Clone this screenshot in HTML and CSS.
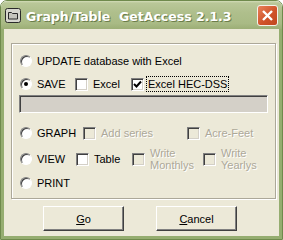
FILE: index.html
```html
<!DOCTYPE html>
<html lang="en">
<head>
    <meta charset="UTF-8">
    <title>Graph/Table GetAccess 2.1.3</title>
    <link rel="stylesheet" href="styles.css">
</head>
<body>

<div class="window">
    <!-- Title bar -->
    <div class="titlebar">
        <svg class="app-icon" width="16" height="15" viewBox="0 0 16 15">
            <rect x="0.5" y="0.5" width="15" height="14" rx="2" fill="#d6d6ce" stroke="#2a2a2a"/>
            <path d="M3.5 4.5h3l1 1h5v5.5h-9z" fill="#c4c4bc" stroke="#2a2a2a"/>
        </svg>
        <span class="title">Graph/Table  GetAccess 2.1.3</span>
        <div class="close-btn">
            <svg width="19" height="19" viewBox="0 0 19 19">
                <path d="M5 5L14 14M14 5L5 14" stroke="#fff" stroke-width="2.4"/>
            </svg>
        </div>
    </div>

    <div class="client">
        <div class="group">
            <div class="row">
                <span class="opt"><span class="radio"></span>UPDATE database with Excel</span>
            </div>
            <div class="row row-save">
                <span class="opt w-save"><span class="radio checked"></span>SAVE</span>
                <span class="opt w-excel"><span class="check"></span>Excel</span>
                <span class="opt">
                    <span class="check">
                        <svg width="9" height="9" viewBox="0 0 9 9"><path d="M1 4l2.5 2.5L8 1.5" stroke="#000" stroke-width="2" fill="none"/></svg>
                    </span>
                    <span class="focus">Excel HEC-DSS</span>
                </span>
            </div>
            <div class="field"></div>
            <div class="row row-graph">
                <span class="opt w-graph"><span class="radio"></span>GRAPH</span>
                <span class="opt w-series disabled"><span class="check"></span>Add series</span>
                <span class="opt disabled"><span class="check"></span>Acre-Feet</span>
            </div>
            <div class="row row-view">
                <span class="opt w-view"><span class="radio"></span>VIEW</span>
                <span class="opt w-table"><span class="check"></span>Table</span>
                <span class="opt w-monthly disabled"><span class="check"></span><span class="two-line">Write<br>Monthlys</span></span>
                <span class="opt disabled"><span class="check"></span><span class="two-line">Write<br>Yearlys</span></span>
            </div>
            <div class="row row-print">
                <span class="opt"><span class="radio"></span>PRINT</span>
            </div>
        </div>

        <div class="buttons">
            <button type="button" class="btn"><u>G</u>o</button>
            <button type="button" class="btn"><u>C</u>ancel</button>
        </div>
    </div>
</div>

</body>
</html>
```

FILE: styles.css
```css
body {
    margin: 0;
    background: #fff;
    font-family: "Liberation Sans", Arial, sans-serif;
    font-size: 11px;
    color: #000;
}

.window {
    width: 283px;
    height: 240px;
    box-sizing: border-box;
    border: 1px solid #6f8a4c;
    border-radius: 7px 7px 0 0;
    overflow: hidden;
    display: flex;
    flex-direction: column;
}

/* Title bar */
.titlebar {
    height: 28px;
    flex: none;
    display: flex;
    align-items: center;
    padding: 0 4px 0 4px;
    background: linear-gradient(#d3dcb8 0, #b9c798 2px, #afbf8c 40%, #a9ba85 80%, #9cae76 100%);
}

.app-icon {
    flex: none;
    margin-top: 1px;
}

.title {
    white-space: pre;
    margin-left: 5px;
    margin-top: 2px;
    font-family: "DejaVu Sans", sans-serif;
    font-weight: bold;
    font-size: 12.5px;
    color: #fff;
    text-shadow: 1px 1px 0 #6b7d4a;
    flex: 1;
}

.close-btn {
    width: 19px;
    height: 19px;
    border: 1px solid #f4f1ea;
    border-radius: 3px;
    background: linear-gradient(135deg, #e8825a, #d0532a 55%, #c0461f);
}

.close-btn svg {
    display: block;
}

/* Client area */
.client {
    flex: 1;
    background: #ece9d8;
    border: 3px solid #95ad70;
    border-top: 0;
    display: flex;
    flex-direction: column;
}

.group {
    margin: 14px 3px 0 7px;
    border: 1px solid #aca899;
    box-shadow: inset 1px 1px 0 #fff, 1px 1px 0 #fff;
    padding: 7px 6px 5px 8px;
    display: flex;
    flex-direction: column;
}

.row {
    height: 20px;
    display: flex;
    align-items: center;
}

.row-save {
    margin-top: 3px;
}

.row-graph {
    margin-top: 10px;
}

.row-view {
    margin-top: 4px;
    height: 24px;
}

.row-print {
    margin-top: 2px;
}

.opt {
    display: flex;
    align-items: center;
    white-space: nowrap;
}

.w-save { width: 55px; }
.w-excel { width: 56px; }
.w-graph { width: 63px; }
.w-series { width: 104px; }
.w-view { width: 56px; }
.w-table { width: 56px; }
.w-monthly { width: 71px; }

.disabled {
    color: #aca899;
    text-shadow: 1px 1px 0 #fff;
}

.two-line {
    line-height: 12px;
}

/* Classic radio */
.radio {
    width: 10px;
    height: 10px;
    flex: none;
    border: 1px solid;
    border-color: #808080 #fff #fff #808080;
    border-radius: 50%;
    background: #fff;
    box-shadow: inset 1px 1px 0 #404040;
    margin-right: 5px;
    display: flex;
    align-items: center;
    justify-content: center;
}

.radio.checked::after {
    content: "";
    width: 4px;
    height: 4px;
    border-radius: 50%;
    background: #000;
}

/* Classic checkbox */
.check {
    width: 11px;
    height: 11px;
    flex: none;
    border: 1px solid;
    border-color: #808080 #fff #fff #808080;
    box-shadow: inset 1px 1px 0 #404040, inset -1px -1px 0 #d4d0c8;
    background: #fff;
    margin-right: 5px;
    display: flex;
    align-items: center;
    justify-content: center;
}

.disabled .check {
    background: #ece9d8;
}

.focus {
    outline: 1px dotted #000;
    padding: 1px 1px;
    margin-left: -2px;
}

.field {
    height: 16px;
    margin: 1px 0 0 -1px;
    width: 247px;
    border: 1px solid;
    border-color: #808080 #fff #fff #808080;
    box-shadow: inset 1px 1px 0 #404040;
    background: #d4d0c8;
}

/* Buttons */
.buttons {
    display: flex;
    gap: 32px;
    padding: 7px 0 0 39px;
}

.btn {
    width: 81px;
    height: 25px;
    font-family: "Liberation Sans", Arial, sans-serif;
    font-size: 11px;
    color: #000;
    background: #ece9d8;
    border: 1px solid;
    border-color: #fff #404040 #404040 #fff;
    box-shadow: inset -1px -1px 0 #808080;
    padding: 0;
}
```
